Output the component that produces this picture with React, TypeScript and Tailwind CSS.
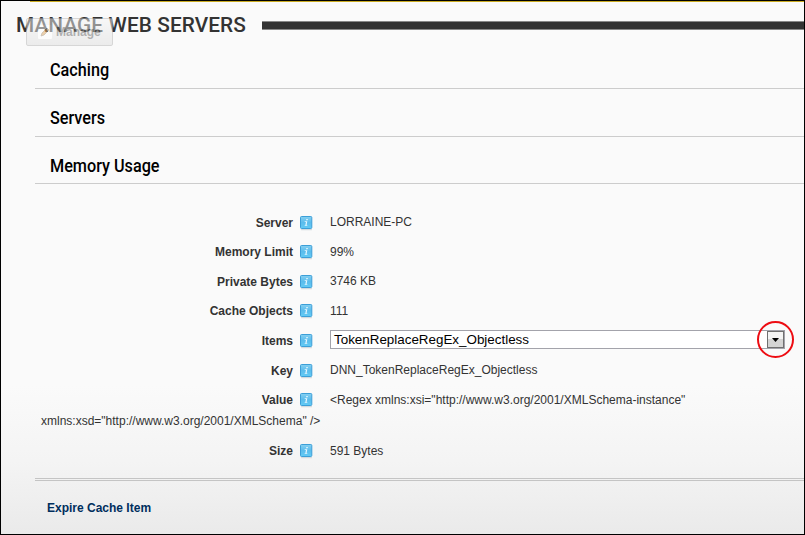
import type { ReactNode } from "react";

function InfoIcon() {
  return (
    <svg width="14" height="16" viewBox="0 0 14 16" className="block shrink-0">
      <defs>
        <linearGradient id="info" x1="0" y1="0" x2="0" y2="1">
          <stop offset="0" stopColor="#86d0f1" />
          <stop offset="0.5" stopColor="#5bbcec" />
          <stop offset="1" stopColor="#62cbf5" />
        </linearGradient>
      </defs>
      <rect x="1" y="13" width="11" height="1.3" rx="0.6" fill="#d3dade" />
      <rect x="0.5" y="0.5" width="11.3" height="12" rx="1" fill="url(#info)" stroke="#3c9fd8" />
      <path d="M6.4 3h1.5l-.3 1.2H6.1zM4.8 5.2h2.5L6.6 8.9h.8l-.2.9H4.6l.2-.9h.6l.5-2.8H4.6z" fill="#e9f8ff" />
    </svg>
  );
}

function Section({ title, className }: { title: string; className: string }) {
  return (
    <div className={`border-b border-[#cccccc] pt-[18px] pl-[15px] ${className}`}>
      <h2 className="origin-left scale-x-[0.9] font-['Roboto'] text-[18px] leading-[22px] font-medium whitespace-nowrap text-black">{title}</h2>
    </div>
  );
}

function Row({ label, className, children }: { label: string; className: string; children: ReactNode }) {
  return (
    <div className={`flex shrink-0 items-start ${className}`}>
      <div className="-mt-px w-[258px] text-right leading-[16px] font-bold whitespace-nowrap">{label}</div>
      <div className="ml-[7px] w-[14px]"><InfoIcon /></div>
      <div className="ml-[16px] leading-[16px] whitespace-nowrap">{children}</div>
    </div>
  );
}

function Value({ children }: { children: ReactNode }) {
  return <div className="-mt-[2px]">{children}</div>;
}

export default function App() {
  return (
    <div className="relative h-[535px] w-[805px] overflow-hidden border border-black bg-[linear-gradient(to_bottom,#fafafa_0,#fafafa_385px,#f4f4f4_460px,#eaeaea_533px)] font-['Liberation_Sans',sans-serif] text-[12px] text-[#333333]">
      <div className="ml-[29px] h-px bg-[#c9aa20]" />
      <header className="flex h-[39px] items-start pl-[15px]">
        <h1 className="w-[246px] origin-left scale-x-[0.99] pt-[10px] font-['Roboto'] text-[21px] leading-[26px] font-medium tracking-[0.1px] whitespace-nowrap text-[#333333]">MANAGE WEB SERVERS</h1>
        <div className="mt-[19px] h-[9px] grow border-y border-[#888888] bg-[#333333]" />
      </header>
      <div className="absolute top-[17px] left-[25px] flex h-[28px] w-[87px] items-center rounded-[2px] border border-[#b4b4b4] bg-[linear-gradient(#f5f5f5,#dedede)] pl-[11px] opacity-50">
        <svg width="14" height="14" viewBox="0 0 14 14">
          <rect width="14" height="14" rx="1" fill="#fff" />
          <path d="M3 11l1-3 5-5 2 2-5 5z" fill="#e0a860" stroke="#8f7c66" strokeWidth=".7" />
        </svg>
        <span className="ml-[4px] text-[12px] font-bold text-[#666666]">Manage</span>
      </div>
      <main className="ml-[34px]">
        <Section title="Caching" className="h-[48px]" />
        <Section title="Servers" className="h-[48px]" />
        <Section title="Memory Usage" className="h-[47px]" />
        <div className="flex h-[297px] flex-col border-b-[3px] border-double border-[#c4c4c4] pt-[32px]">
          <Row label="Server" className="h-[29px]"><Value>LORRAINE-PC</Value></Row>
          <Row label="Memory Limit" className="h-[30px]"><div className="-mt-px">99%</div></Row>
          <Row label="Private Bytes" className="h-[29px]"><Value>3746 KB</Value></Row>
          <Row label="Cache Objects" className="h-[30px]"><div className="-mt-px">111</div></Row>
          <Row label="Items" className="h-[30px]">
            <div className="-mt-[4px] flex h-[19px] w-[455px] items-center justify-between border border-[#a3a3ab] bg-white pl-[3px] text-[13.4px] text-black">
              <span>TokenReplaceRegEx_Objectless</span>
              <span className="flex h-[17px] w-[17px] items-center justify-center border border-[#707070] bg-[linear-gradient(#f4f4f4_50%,#d4d4d4_50%)]">
                <svg width="7" height="4" viewBox="0 0 7 4"><path d="M0 0h7L3.5 4z" fill="#000" /></svg>
              </span>
            </div>
          </Row>
          <Row label="Key" className="h-[29px]"><Value>DNN_TokenReplaceRegEx_Objectless</Value></Row>
          <Row label="Value" className="h-[20px]"><div className="-mt-px">&lt;Regex xmlns:xsi="http://www.w3.org/2001/XMLSchema-instance"</div></Row>
          <p className="h-[31px] shrink-0 pl-[6px] leading-[16px] whitespace-nowrap">xmlns:xsd="http://www.w3.org/2001/XMLSchema" /&gt;</p>
          <Row label="Size" className="h-[20px]"><div className="-mt-px">591 Bytes</div></Row>
        </div>
        <a className="mt-[19px] ml-[12px] block leading-[16px] font-bold text-[#002e5d]">Expire Cache Item</a>
      </main>
      <svg className="absolute top-[319px] left-[755px]" width="40" height="40" viewBox="0 0 40 40">
        <circle cx="19.5" cy="19.5" r="17.5" fill="none" stroke="#ed0c12" strokeWidth="2" />
      </svg>
    </div>
  );
}
